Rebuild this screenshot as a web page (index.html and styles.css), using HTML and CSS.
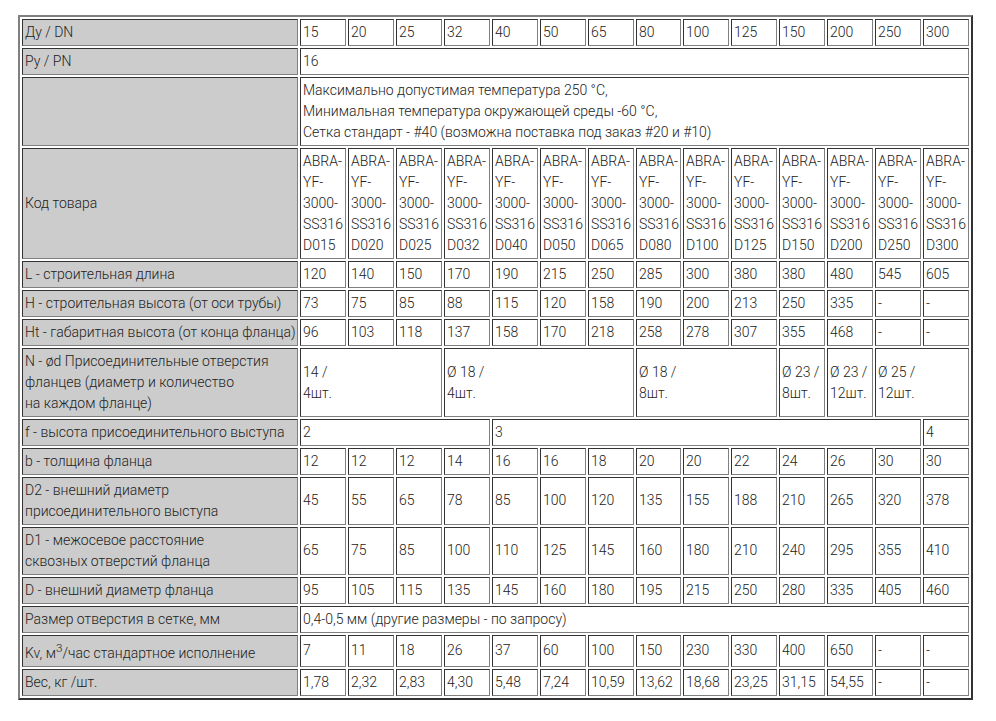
FILE: index.html
```html
<!DOCTYPE html>
<html lang="ru">
<head>
<meta charset="utf-8">
<title>Таблица</title>
<link rel="stylesheet" href="styles.css">
</head>
<body>
<table class="spec">
<colgroup><col class="c-head"><col class="c"><col class="c"><col class="c"><col class="c"><col class="c"><col class="c"><col class="c"><col class="c-narrow"><col class="c"><col class="c"><col class="c"><col class="c"><col class="c"><col class="c"></colgroup>
<tbody>
<tr><th>Ду / DN</th><td>15</td><td>20</td><td>25</td><td>32</td><td>40</td><td>50</td><td>65</td><td>80</td><td>100</td><td>125</td><td>150</td><td>200</td><td>250</td><td>300</td></tr>
<tr><th>Ру / PN</th><td colspan="14">16</td></tr>
<tr><th></th><td colspan="14">Максимально допустимая температура 250 °C,<br>Минимальная температура окружающей среды -60 °C,<br>Сетка стандарт - #40 (возможна поставка под заказ #20 и #10)</td></tr>
<tr><th>Код товара</th><td>ABRA-YF-3000-SS316 D015</td><td>ABRA-YF-3000-SS316 D020</td><td>ABRA-YF-3000-SS316 D025</td><td>ABRA-YF-3000-SS316 D032</td><td>ABRA-YF-3000-SS316 D040</td><td>ABRA-YF-3000-SS316 D050</td><td>ABRA-YF-3000-SS316 D065</td><td>ABRA-YF-3000-SS316 D080</td><td>ABRA-YF-3000-SS316 D100</td><td>ABRA-YF-3000-SS316 D125</td><td>ABRA-YF-3000-SS316 D150</td><td>ABRA-YF-3000-SS316 D200</td><td>ABRA-YF-3000-SS316 D250</td><td>ABRA-YF-3000-SS316 D300</td></tr>
<tr><th>L - строительная длина</th><td>120</td><td>140</td><td>150</td><td>170</td><td>190</td><td>215</td><td>250</td><td>285</td><td>300</td><td>380</td><td>380</td><td>480</td><td>545</td><td>605</td></tr>
<tr><th>H - строительная высота (от оси трубы)</th><td>73</td><td>75</td><td>85</td><td>88</td><td>115</td><td>120</td><td>158</td><td>190</td><td>200</td><td>213</td><td>250</td><td>335</td><td>-</td><td>-</td></tr>
<tr><th>Ht - габаритная высота (от конца фланца)</th><td>96</td><td>103</td><td>118</td><td>137</td><td>158</td><td>170</td><td>218</td><td>258</td><td>278</td><td>307</td><td>355</td><td>468</td><td>-</td><td>-</td></tr>
<tr><th>N - ød Присоединительные отверстия<br>фланцев (диаметр и количество<br>на каждом фланце)</th><td colspan="3">14 /<br>4шт.</td><td colspan="4">Ø 18 /<br>4шт.</td><td colspan="3">Ø 18 /<br>8шт.</td><td>Ø 23 /<br>8шт.</td><td>Ø 23 /<br>12шт.</td><td colspan="2">Ø 25 /<br>12шт.</td></tr>
<tr><th>f - высота присоединительного выступа</th><td colspan="4">2</td><td colspan="9">3</td><td>4</td></tr>
<tr><th>b - толщина фланца</th><td>12</td><td>12</td><td>12</td><td>14</td><td>16</td><td>16</td><td>18</td><td>20</td><td>20</td><td>22</td><td>24</td><td>26</td><td>30</td><td>30</td></tr>
<tr class="raised"><th>D2 - внешний диаметр<br>присоединительного выступа</th><td>45</td><td>55</td><td>65</td><td>78</td><td>85</td><td>100</td><td>120</td><td>135</td><td>155</td><td>188</td><td>210</td><td>265</td><td>320</td><td>378</td></tr>
<tr class="raised"><th>D1 - межосевое расстояние<br>сквозных отверстий фланца</th><td>65</td><td>75</td><td>85</td><td>100</td><td>110</td><td>125</td><td>145</td><td>160</td><td>180</td><td>210</td><td>240</td><td>295</td><td>355</td><td>410</td></tr>
<tr><th>D - внешний диаметр фланца</th><td>95</td><td>105</td><td>115</td><td>135</td><td>145</td><td>160</td><td>180</td><td>195</td><td>215</td><td>250</td><td>280</td><td>335</td><td>405</td><td>460</td></tr>
<tr><th>Размер отверстия в сетке, мм</th><td colspan="14">0,4-0,5 мм (другие размеры - по запросу)</td></tr>
<tr class="raised"><th>Kv, м<sup>3</sup>/час стандартное исполнение</th><td>7</td><td>11</td><td>18</td><td>26</td><td>37</td><td>60</td><td>100</td><td>150</td><td>230</td><td>330</td><td>400</td><td>650</td><td>-</td><td>-</td></tr>
<tr><th>Вес, кг /шт.</th><td>1,78</td><td>2,32</td><td>2,83</td><td>4,30</td><td>5,48</td><td>7,24</td><td>10,59</td><td>13,62</td><td>18,68</td><td>23,25</td><td>31,15</td><td>54,55</td><td>-</td><td>-</td></tr>
</tbody>
</table>
</body>
</html>
```
FILE: styles.css
```css
html, body {
  margin: 0;
  background: #fff;
}
body {
  padding: 15px 0 0 18px;
  font-family: Roboto, "Liberation Sans", sans-serif;
  font-size: 14px;
  font-weight: 300;
  line-height: 21px;
  color: #222;
}
.spec {
  table-layout: fixed;
  width: 955px;
  border-collapse: separate;
  border-spacing: 2px;
  border-style: solid;
  border-width: 2px;
  border-color: #808080 #333 #333 #808080;
}
.c-head { width: 276px; }
.c { width: 46px; }
.c-narrow { width: 45px; }
.spec th, .spec td {
  padding: 2px;
  border-style: solid;
  border-width: 1px;
  border-color: #333 #808080 #808080 #333;
  text-align: left;
  font-weight: 300;
  vertical-align: middle;
}
.spec th {
  background: #ccc;
  white-space: nowrap;
}
.spec .raised td {
  padding-bottom: 3px;
}
```
